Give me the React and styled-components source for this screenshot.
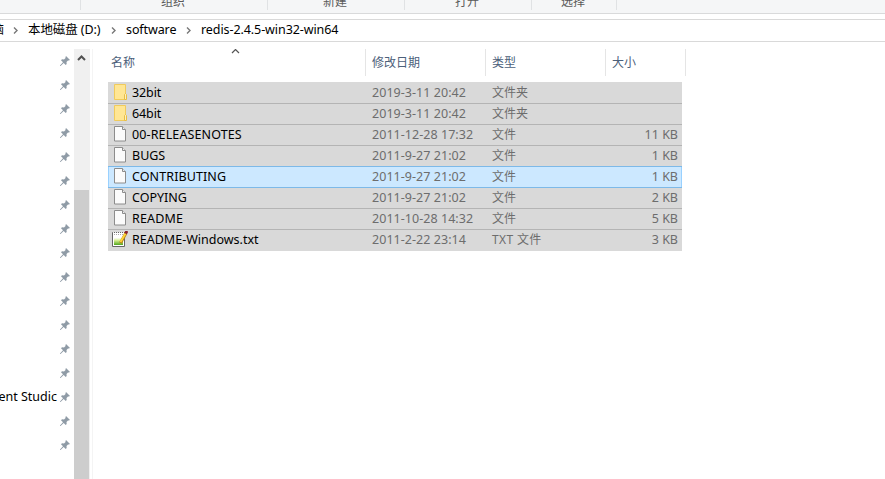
import React from "react";
import styled, { createGlobalStyle } from "styled-components";

const Global = createGlobalStyle`
  * { box-sizing: border-box; }
  body {
    margin: 0;
    overflow: hidden;
    background: #fff;
    color: #000;
    font: 12.5px/20px "Noto Sans", "Noto Sans CJK SC", sans-serif;
  }
`;

const Window = styled.div`
  width: 885px;
  height: 479px;
  overflow: hidden;
  display: flex;
  flex-direction: column;
`;

const Ribbon = styled.div`
  height: 14px;
  flex: none;
  display: flex;
  background: #f5f6f7;
  border-bottom: 1px solid #d9dadb;
`;

const RibbonGroup = styled.div`
  width: ${(p) => p.$width}px;
  height: 10px;
  flex: none;
  display: flex;
  align-items: flex-end;
  justify-content: center;
  border-right: 1px solid #e0e2e4;
  color: #5a5a5a;
  font-size: 12px;
  line-height: 16px;
  padding-right: 2px;
`;

const AddressBar = styled.div`
  height: 23px;
  margin-top: 5px;
  flex: none;
  display: flex;
  border: solid #d9d9d9;
  border-width: 1px 0;
`;

const Crumb = styled.span`
  width: ${(p) => p.$width}px;
  flex: none;
  white-space: nowrap;
  line-height: 20px;
  display: flex;
  justify-content: ${(p) => (p.$clipped ? "flex-end" : "flex-start")};
  letter-spacing: ${(p) => p.$track || 0}px;
`;

const CrumbArrow = styled.svg`
  width: 5px;
  height: 7px;
  flex: none;
  margin: 7px 10px 0 9px;
`;

const Body = styled.div`
  flex: 1;
  display: flex;
  margin-top: 7px;
`;

const NavPane = styled.div`
  width: 74px;
  flex: none;
`;

const NavRow = styled.div`
  height: 24px;
  display: flex;
  align-items: center;
  justify-content: flex-end;
  padding-right: 4px;
  white-space: nowrap;
`;

const Pin = styled.svg`
  width: 10px;
  height: 10px;
  flex: none;
  margin-left: 3px;
`;

const ScrollBar = styled.div`
  width: 16px;
  flex: none;
  background: #f0f0f0;
  display: flex;
  flex-direction: column;
`;

const ScrollUp = styled.svg`
  width: 16px;
  height: 17px;
  margin-bottom: 124px;
`;

const ScrollThumb = styled.div`
  flex: 1;
  width: 15px;
  background: #cdcdcd;
`;

const Files = styled.div`
  margin-left: 2px;
  flex: 1;
  border-left: 1px solid #f4f4f4;
  padding-left: 15px;
`;

const Header = styled.div`
  display: flex;
  height: 27px;
  margin-bottom: 6px;
`;

const HeaderCell = styled.div`
  position: relative;
  width: ${(p) => p.$width}px;
  padding-left: ${(p) => p.$pad}px;
  border-right: 1px solid #e5e5e5;
  color: #4c607a;
  font-size: 12px;
  line-height: 27px;
`;

const SortMark = styled.svg`
  position: absolute;
  left: 123px;
  top: 0;
  width: 9px;
  height: 5px;
`;

const Row = styled.div`
  width: 574px;
  height: 21px;
  display: grid;
  grid-template-columns: 264px 120px 118px 68px;
  background: ${(p) => (p.$active ? "#cce8ff" : "#d9d9d9")};
  border-top: 1px solid ${(p) => p.$edge || "#b4b4b4"};
  box-shadow: ${(p) =>
    p.$active ? "inset 1px 0 #99d1ff, inset -1px 0 #99d1ff" : "none"};

  &:last-child {
    height: 22px;
  }
`;

const NameCell = styled.div`
  display: flex;
  padding-left: 4px;
  gap: 4px;
  white-space: nowrap;
`;

const NameText = styled.span`
  letter-spacing: ${(p) => p.$track || 0}px;
`;

const Cell = styled.div`
  color: #6d6d6d;
  white-space: nowrap;
  text-align: ${(p) => (p.$right ? "right" : "left")};
  letter-spacing: ${(p) => p.$track || 0}px;
`;

const TypeCell = styled(Cell)`
  font-size: 12px;
`;

const Icon = styled.svg`
  width: 16px;
  height: 16px;
  margin-top: 1px;
  flex: none;
`;

const FolderIcon = () => (
  <Icon viewBox="0 0 16 16">
    <path d="M2.500.5h11v15h-11z" fill="#ffe694" stroke="#f0cb5c" />
    <path d="M12.500 15.500v-5l1-1 1 1v5z" fill="#fff0b8" stroke="#e8bd45" />
  </Icon>
);

const FileIcon = () => (
  <Icon viewBox="0 0 16 16">
    <path d="M2.500.5h8l3 3v11.500h-11z" fill="#fbfbfb" stroke="#8c8c8c" />
    <path d="M10.500.5v3h3" fill="#eee" stroke="#8c8c8c" />
  </Icon>
);

const NoteIcon = () => (
  <Icon viewBox="0 0 16 16">
    <defs>
      <linearGradient id="page" x2="0" y2="1">
        <stop offset=".2" stopColor="#fff" />
        <stop offset=".5" stopColor="#d2ec8c" />
        <stop offset="1" stopColor="#4fa51c" />
      </linearGradient>
    </defs>
    <path d="M.5 1.500h12v14H.5z" fill="#fff" stroke="#666" />
    <path d="M2 5h9v9H2z" fill="url(#page)" />
    <path d="M1 1.500h12" stroke="#eee" strokeDasharray="1 1" />
    <path d="M2 3.500h9" stroke="#aaa" strokeDasharray="1 1" />
    <path d="M14 2L8.500 12" stroke="#b98216" strokeWidth="3" />
    <path d="M13.500 2.500L8.500 11" stroke="#ffd63a" strokeWidth="1.800" />
    <path d="M13.500 2.500L15 0" stroke="#8b2330" strokeWidth="3" />
  </Icon>
);

const icons = { folder: FolderIcon, file: FileIcon, note: NoteIcon };

const rows = [
  { icon: "folder", name: "32bit", track: -0.1, date: "2019-3-11 20:42", type: "文件夹", size: "", edge: "#d9d9d9" },
  { icon: "folder", name: "64bit", track: -0.1, date: "2019-3-11 20:42", type: "文件夹", size: "" },
  { icon: "file", name: "00-RELEASENOTES", track: 0.12, date: "2011-12-28 17:32", type: "文件", size: "11 KB" },
  { icon: "file", name: "BUGS", date: "2011-9-27 21:02", type: "文件", size: "1 KB" },
  { icon: "file", name: "CONTRIBUTING", track: 0.1, date: "2011-9-27 21:02", type: "文件", size: "1 KB", active: true, edge: "#7db9e8" },
  { icon: "file", name: "COPYING", date: "2011-9-27 21:02", type: "文件", size: "2 KB", edge: "#7db9e8" },
  { icon: "file", name: "README", track: 0.15, date: "2011-10-28 14:32", type: "文件", size: "5 KB" },
  { icon: "note", name: "README-Windows.txt", date: "2011-2-22 23:14", type: "TXT 文件", typeTrack: 0.35, size: "3 KB" },
];

const pins = Array.from({ length: 17 }, (_, i) => (i === 14 ? "ent Studic" : ""));

const Arrow = () => (
  <CrumbArrow viewBox="0 0 5 7">
    <path d="M1 .5l3 3-3 3" fill="none" stroke="#777" strokeWidth="1.400" />
  </CrumbArrow>
);

export default function App() {
  return (
    <Window>
      <Global />
      <Ribbon>
        <RibbonGroup $width={81} />
        <RibbonGroup $width={187}>组织</RibbonGroup>
        <RibbonGroup $width={137}>新建</RibbonGroup>
        <RibbonGroup $width={127}>打开</RibbonGroup>
        <RibbonGroup $width={85}>选择</RibbonGroup>
      </Ribbon>
      <AddressBar>
        <Crumb $width={4} $clipped>脑</Crumb>
        <Arrow />
        <Crumb $width={74} $track={-0.1}>本地磁盘 (D:)</Crumb>
        <Arrow />
        <Crumb $width={51} $track={-0.1}>software</Crumb>
        <Arrow />
        <Crumb $width={140} $track={-0.08}>redis-2.4.5-win32-win64</Crumb>
      </AddressBar>
      <Body>
        <NavPane>
          {pins.map((label, i) => (
            <NavRow key={i}>
              {label}
              <Pin viewBox="0 0 10 10">
                <path d="M6 0l4 4-1.200.6-.8-.2-1.500 1.600.2 2-1 1L3.700 7 .5 10H0v-.5L3 6.300 1 4.300l1-1 2 .2L5.600 2l-.2-.8z" fill="#8f9ba6" />
              </Pin>
            </NavRow>
          ))}
        </NavPane>
        <ScrollBar>
          <ScrollUp viewBox="0 0 16 17">
            <path d="M4 11l3.500-3.500L11 11" fill="none" stroke="#505050" strokeWidth="2" />
          </ScrollUp>
          <ScrollThumb />
        </ScrollBar>
        <Files>
          <Header>
            <HeaderCell $width={258} $pad={3}>
              名称
              <SortMark viewBox="0 0 9 5">
                <path d="M1 4l3.500-3.500L8 4" fill="none" stroke="#555" strokeWidth="1.200" />
              </SortMark>
            </HeaderCell>
            <HeaderCell $width={120} $pad={6}>修改日期</HeaderCell>
            <HeaderCell $width={120} $pad={6}>类型</HeaderCell>
            <HeaderCell $width={80} $pad={6}>大小</HeaderCell>
          </Header>
          {rows.map((r) => {
            const Glyph = icons[r.icon];
            return (
              <Row key={r.name} $active={r.active} $edge={r.edge}>
                <NameCell>
                  <Glyph />
                  <NameText $track={r.track}>{r.name}</NameText>
                </NameCell>
                <Cell $track={0.04}>{r.date}</Cell>
                <TypeCell $track={r.typeTrack}>{r.type}</TypeCell>
                <Cell $right>{r.size}</Cell>
              </Row>
            );
          })}
        </Files>
      </Body>
    </Window>
  );
}
